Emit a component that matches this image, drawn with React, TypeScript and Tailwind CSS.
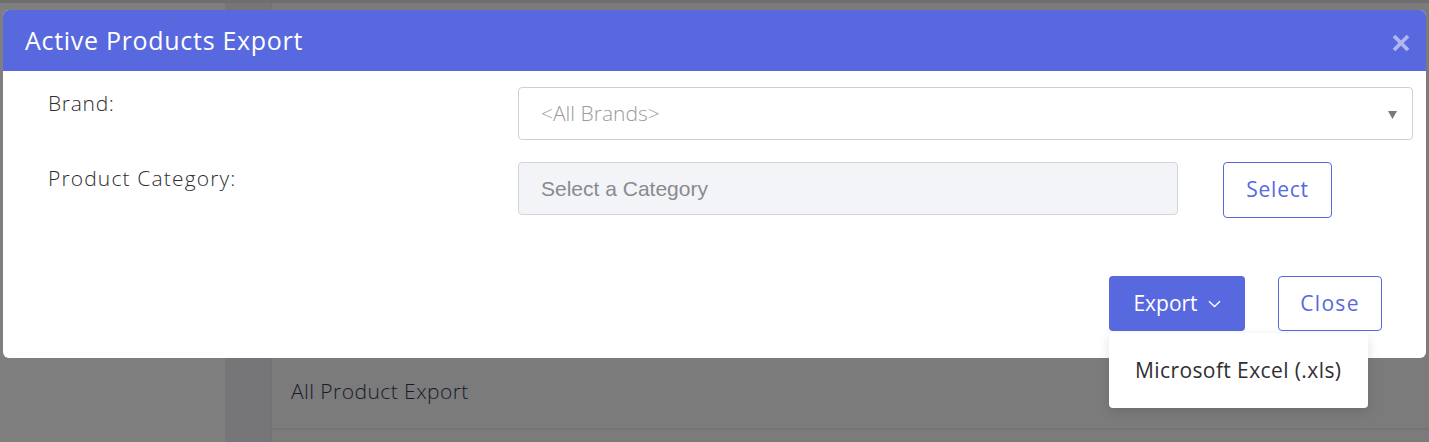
import React from "react";

const poppins = { fontFamily: '"Open Sans", "Noto Sans", sans-serif' };

export default function App() {
  return (
    <div className="relative w-[1429px] h-[442px] overflow-hidden bg-[#7b7b7c]" style={poppins}>
      {/* background page */}
      <div className="h-[3px] bg-[#6e6e6f]" />
      <div className="flex h-[439px]">
        <div className="w-[225px] bg-[#7f7f7f]" />
        <div className="w-[45px] bg-[#767679]" />
        <div className="flex-1 flex flex-col pt-[355px] border-l-2 border-[#737375]">
          <div className="h-[72px] pl-[19px] pb-[2px] flex items-center border-b-2 border-[#757577] text-[21px] font-light tracking-[0.45px] text-[#1a1a2a]">
            All Product Export
          </div>
        </div>
      </div>

      {/* modal */}
      <div className="absolute left-[3px] top-[10px] w-[1423px] h-[348px] bg-white rounded-[6px] overflow-hidden">
        <div className="h-[61px] bg-[#5868de] flex items-center justify-between pl-[22px] pr-[16px]">
          <span className="text-white text-[25px] tracking-[0.7px] leading-none">Active Products Export</span>
          <svg width="18" height="18" viewBox="0 0 18 18" className="mt-[4px]">
            <path d="M2 2 L16 16 M16 2 L2 16" stroke="#b1b6f0" strokeWidth="3.8" strokeLinecap="butt" />
          </svg>
        </div>
        <div className="pl-[45px] pr-[13px] pt-[16px]">
          <div className="flex items-start">
            <div className="w-[470px] pt-[3px] text-[21px] font-light tracking-[0.7px] text-[#2e2e30] leading-[26px]">Brand:</div>
            <div className="flex-1 h-[53px] border border-[#cfcfd3] rounded-[4px] flex items-center justify-between pl-[22px] pr-[15px]">
              <span className="text-[21px] font-light text-[#9a9aa0]">&lt;All Brands&gt;</span>
              <svg width="9" height="8" viewBox="0 0 9 8" className="mt-[2px]">
                <path d="M0 0 H9 L4.5 8 Z" fill="#7a7a7a" />
              </svg>
            </div>
          </div>
          <div className="flex items-start mt-[22px]">
            <div className="w-[470px] pt-[3px] text-[21px] font-light tracking-[1.15px] text-[#2e2e30] leading-[26px]">Product Category:</div>
            <div
              className="w-[660px] h-[53px] bg-[#f3f4f8] border border-[#d3d5da] rounded-[4px] flex items-center pl-[22px] text-[21px] text-[#8a8a8e]"
              style={{ fontFamily: '"Liberation Sans", Arial, sans-serif' }}
            >
              Select a Category
            </div>
            <button className="ml-[45px] w-[109px] h-[56px] border border-[#5868de] rounded-[4px] text-[#5868de] text-[21px] tracking-[0.8px]">
              Select
            </button>
          </div>
          <div className="flex justify-end mt-[58px] pr-[31px] gap-[33px]">
            <button className="w-[136px] h-[55px] bg-[#5868de] rounded-[4px] text-white text-[21px] flex items-center justify-center gap-[10px]">
              Export
              <svg width="13" height="8" viewBox="0 0 13 8">
                <path d="M1 1.2 L6.5 6.5 L12 1.2" stroke="white" strokeWidth="1.4" fill="none" />
              </svg>
            </button>
            <button className="w-[104px] h-[55px] border border-[#5868de] rounded-[4px] text-[#5868de] text-[21px] tracking-[1.3px]">
              Close
            </button>
          </div>
        </div>
      </div>

      {/* dropdown */}
      <div className="absolute left-[1109px] top-[333px] w-[259px] h-[75px] bg-white rounded-[4px] shadow-[0_4px_12px_rgba(0,0,0,0.12)] flex items-center pl-[26px] text-[21px] tracking-[0.4px] text-[#2f2f33]">
        Microsoft Excel (.xls)
      </div>
    </div>
  );
}
